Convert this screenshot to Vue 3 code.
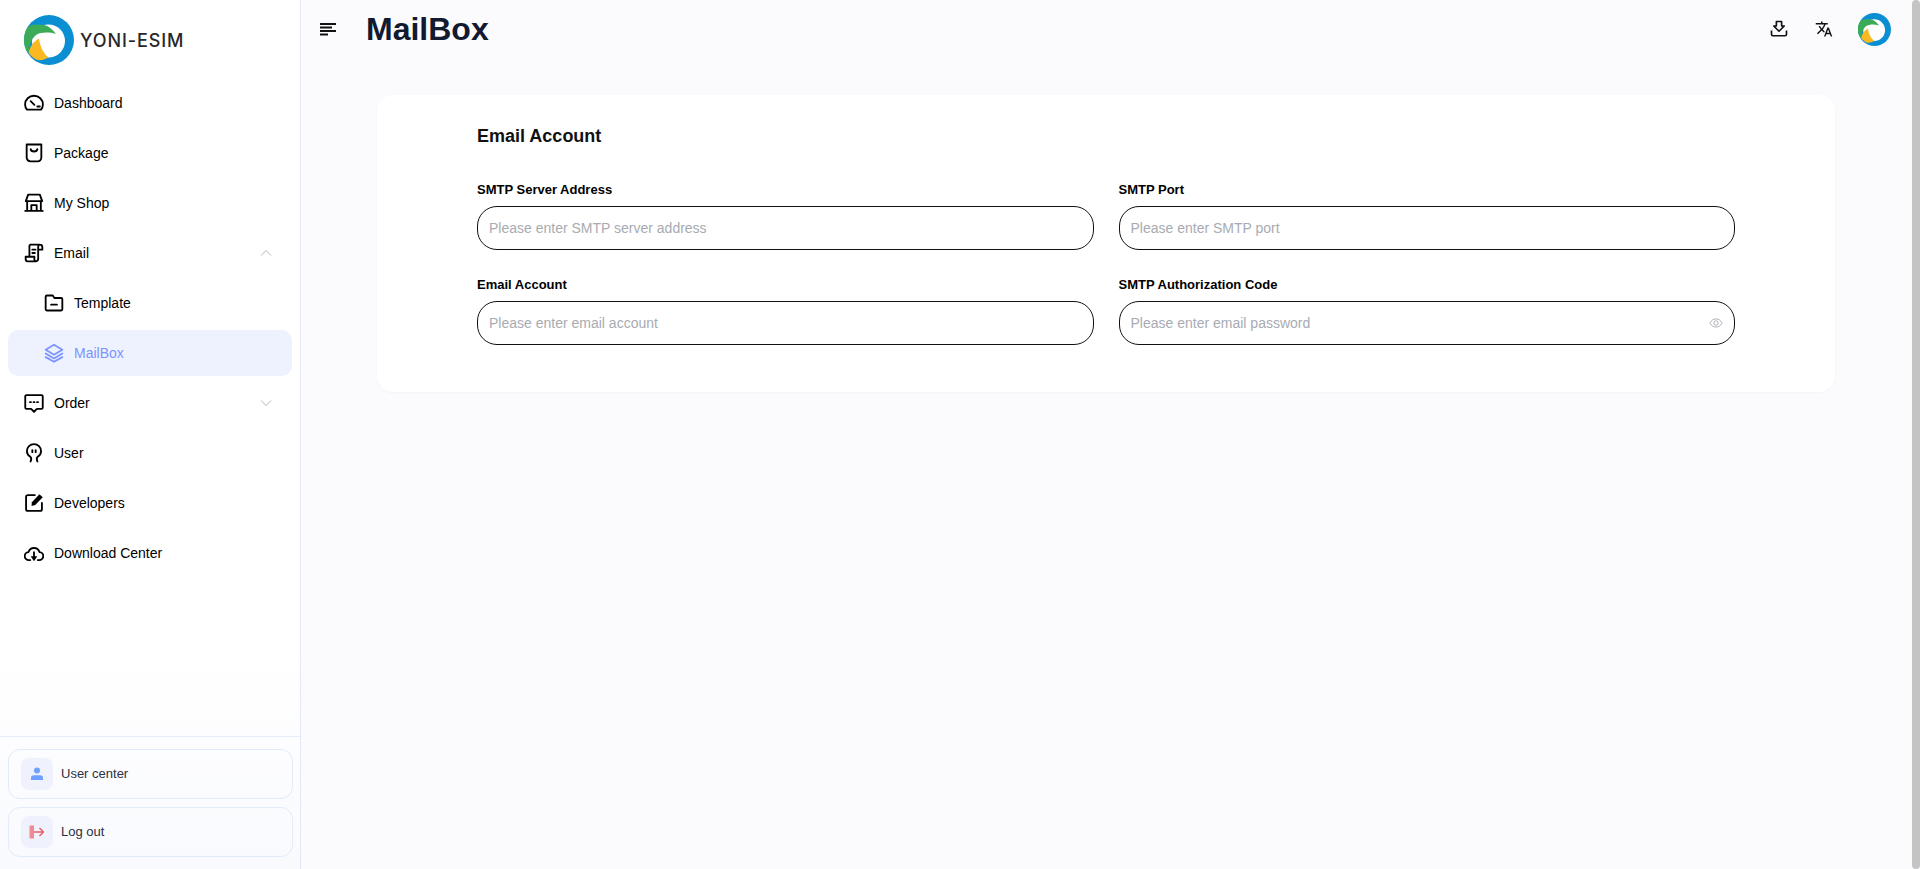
<script setup>
const menu = [
  { label: 'Dashboard', d: 'M3.6 20C2.2 18.2 1.3 16 1.3 13.7 1.3 7.9 6.100 3.300 12 3.300s10.700 4.600 10.700 10.400c0 2.300-.9 4.500-2.300 6.300ZM8 9.800l4.500 4.400M16 16.200h3' },
  { label: 'Package', d: 'M3.200 1.800h17.600v15.700a4.500 4.500 0 0 1-4.500 4.500H7.700a4.500 4.500 0 0 1-4.500-4.500ZM8 7.500c.6 3.600 7.400 3.600 8 0' },
  { label: 'My Shop', d: 'M5 2h14l2.800 7.800H2.200ZM3.800 9.800v11.400M20.200 9.800v11.400M1.500 21.500h21M8.800 21.500v-7h6.400v7' },
  { label: 'Email', chevron: 'up', d: 'M7.500 2H19a3 3 0 0 1 3 3v3h-4M19 2a2.500 2.500 0 0 0-2 2.500v14a3 3 0 0 1-3 3.500H4.500A2.500 2.500 0 0 1 2 19.500V16.500h10.500v2a3 3 0 0 0 1.500 3.500M6.500 16.500V4.500a2.500 2.500 0 0 1 1-2.500M10 8h3.800M10 12h3' },
  { label: 'Template', sub: true, d: 'M2 4.500A1.500 1.500 0 0 1 3.500 3h7l2 3H20.500A1.500 1.500 0 0 1 22 7.500v12a1.500 1.500 0 0 1-1.500 1.500h-17A1.500 1.500 0 0 1 2 19.500ZM8.500 14h7' },
  { label: 'MailBox', sub: true, active: true, d: 'M12 2 22 8 12 14 2 8ZM2 12.500l10 6 10-6M2 17l10 5.500 10-5.500' },
  { label: 'Order', chevron: 'down', d: 'M3 2.500h18A1.500 1.500 0 0 1 22.500 4v13.500a1.500 1.500 0 0 1-1.500 1.500H15.500L12 22.500 8.500 19H3a1.500 1.500 0 0 1-1.500-1.500V4A1.500 1.500 0 0 1 3 2.500ZM7.200 11h1.100M11.500 11h1.100M15.700 11h1.100' },
  { label: 'User', d: 'M7.500 16.500C5 14.800 3.500 12.500 3.500 9.800a8.500 8.500 0 0 1 17 0c0 2.700-1.500 5-4 6.700M7.500 16.500c1.500 1 1.300 3.500.4 5.700M16.500 16.500c-1.500 1-1.300 3.500-.4 5.700M10 8.500v2.500M14 8.500v2.500' },
  { label: 'Developers', d: 'M21.500 12v7.500A2 2 0 0 1 19.500 21.500h-15A2 2 0 0 1 2.500 19.500v-15A2 2 0 0 1 4.500 2.500H13', fill: 'M9.500 11 18.500 1.500 22.500 5l-9 9.500-4.500 1Z' },
  { label: 'Download Center', d: 'M7.500 20.500H6a4.800 4.800 0 0 1-.6-9.600 6.900 6.900 0 0 1 13.200 0A4.800 4.800 0 0 1 18 20.500h-1.500M12 11v8', fill: 'M8 16h8l-4 6Z' }
]
const fields = [
  { label: 'SMTP Server Address', placeholder: 'Please enter SMTP server address' },
  { label: 'SMTP Port', placeholder: 'Please enter SMTP port' },
  { label: 'Email Account', placeholder: 'Please enter email account' },
  { label: 'SMTP Authorization Code', placeholder: 'Please enter email password', eye: true }
]
</script>

<template>
  <div class="shell">
    <aside class="sidebar">
      <div class="brand">
        <svg class="logo" viewBox="0 0 50 50">
          <circle cx="25" cy="25" r="25" fill="#0b8fd3" />
          <circle cx="24.500" cy="26" r="16.500" fill="#fff" />
          <path d="M3.650 38A25 25 0 0 1 4 11.500C9 9 15 9 20 10 25 11 29 15 32 19 25 17 17 17 12 20 7 24 5 31 4.700 38Z" fill="#3cab57" />
          <path d="M15 23.500C16 31 19 38 24.500 42.500 21 44.500 17 45.500 14 45 10 44 7 41 4.700 38 5.500 32 9.500 26.500 15 23.500Z" fill="#fbb921" />
        </svg>
        <span class="brand-name">YONI-ESIM</span>
      </div>
      <nav class="menu">
        <a v-for="item in menu" :key="item.label" class="item" :class="{ sub: item.sub, active: item.active }">
          <svg class="icon" viewBox="0 0 24 24">
            <path :d="item.d" />
            <path v-if="item.fill" :d="item.fill" class="solid" />
          </svg>
          <span class="item-label">{{ item.label }}</span>
          <svg v-if="item.chevron" class="chevron" viewBox="0 0 12 8">
            <path :d="item.chevron === 'up' ? 'M1 6.500 6 1.500l5 5' : 'M1 1.500 6 6.500l5-5'" />
          </svg>
        </a>
      </nav>
      <div class="foot">
        <a class="foot-btn">
          <span class="foot-icon">
            <svg viewBox="0 0 16 16" width="16" height="16">
              <circle cx="8" cy="4.500" r="3" fill="#6f9fff" />
              <path d="M2 14v-2.500C2 10 3.500 9.200 5 9.200h6c1.500 0 3 .8 3 2.300V14Z" fill="#6f9fff" />
            </svg>
          </span>
          <span class="foot-label">User center</span>
        </a>
        <a class="foot-btn">
          <span class="foot-icon">
            <svg viewBox="0 0 16 16" width="16" height="16">
              <rect x="0.500" y="1.500" width="4.500" height="13" fill="#ef8b92" />
              <path d="M5 8h9.500M10.500 4l4 4-4 4" fill="none" stroke="#ec5f69" stroke-width="1.500" />
            </svg>
          </span>
          <span class="foot-label">Log out</span>
        </a>
      </div>
    </aside>

    <div class="main">
      <header class="topbar">
        <svg class="hamburger" viewBox="0 0 16 13">
          <path d="M0 1h16M0 4.500h12M0 8h16M0 11.500h8" />
        </svg>
        <h1 class="title">MailBox</h1>
        <div class="tools">
          <svg class="tool" viewBox="0 0 24 24">
            <path d="M8.500 2h7v6H19l-7 7-7-7h3.500ZM2 14v5a2 2 0 0 0 2 2h16a2 2 0 0 0 2-2v-5" class="tool-line" />
          </svg>
          <svg class="tool" viewBox="0 0 24 24">
            <path d="M12.870 15.070l-2.540-2.510.03-.03c1.740-1.940 2.980-4.170 3.710-6.530H17V4h-7V2H8v2H1v1.990h11.170C11.500 7.920 10.440 9.750 9 11.350 8.070 10.320 7.300 9.190 6.690 8h-2c.73 1.630 1.730 3.170 2.980 4.560l-5.090 5.020L4 19l5-5 3.110 3.110.76-2.040zM18.500 10h-2L12 22h2l1.120-3h4.750L21 22h2l-4.500-12zm-2.620 7l1.620-4.330L19.120 17h-3.240z" fill="#111" />
          </svg>
          <svg class="avatar" viewBox="0 0 50 50">
            <circle cx="25" cy="25" r="25" fill="#0b8fd3" />
            <circle cx="24.500" cy="26" r="16.500" fill="#fff" />
            <path d="M3.650 38A25 25 0 0 1 4 11.500C9 9 15 9 20 10 25 11 29 15 32 19 25 17 17 17 12 20 7 24 5 31 4.700 38Z" fill="#3cab57" />
            <path d="M15 23.500C16 31 19 38 24.500 42.500 21 44.500 17 45.500 14 45 10 44 7 41 4.700 38 5.500 32 9.500 26.500 15 23.500Z" fill="#fbb921" />
          </svg>
        </div>
      </header>
      <section class="card">
        <h2 class="card-title">Email Account</h2>
        <div class="form">
          <label v-for="f in fields" :key="f.label" class="field">
            <span class="field-label">{{ f.label }}</span>
            <span class="input-wrap">
              <input class="input" type="text" :placeholder="f.placeholder" />
              <svg v-if="f.eye" class="eye" viewBox="0 0 24 24">
                <path d="M1.500 12C4 7.500 7.700 5 12 5s8 2.500 10.500 7c-2.500 4.500-6.200 7-10.500 7S4 16.500 1.500 12Z" />
                <circle cx="12" cy="12" r="3.800" />
              </svg>
            </span>
          </label>
        </div>
      </section>
    </div>
    <div class="scrollbar"></div>
  </div>
</template>

<style>
html, body { margin: 0; height: 100%; overflow: hidden; }
</style>

<style scoped>
.shell {
  display: flex;
  height: 869px;
  background: #fbfbfe;
  font-family: "Liberation Sans", Arial, sans-serif;
  color: #000;
}
.sidebar {
  width: 301px;
  flex: none;
  display: flex;
  flex-direction: column;
  border-right: 1px solid #e6e8f6;
  box-sizing: border-box;
  background: linear-gradient(180deg, #fff 75%, #f9fafe 100%);
}
.brand { height: 80px; display: flex; align-items: center; padding-left: 24px; box-sizing: border-box; }
.logo { width: 50px; height: 50px; flex: none; }
.brand-name {
  margin-left: 6px;
  font-family: Inter, sans-serif;
  font-size: 18px;
  font-weight: 500;
  letter-spacing: .9px;
  color: #2b2728;
}
.menu { display: flex; flex-direction: column; gap: 4px; padding: 0 8px; flex: 1; }
.item {
  height: 46px;
  display: flex;
  align-items: center;
  padding-left: 16px;
  padding-right: 20px;
  border-radius: 10px;
  font-size: 14px;
  box-sizing: border-box;
}
.item.sub { padding-left: 36px; }
.item.active { background: #eef2fe; color: #7c94ff; }
.icon { width: 20px; height: 20px; flex: none; margin-right: 10px; fill: none; stroke: currentColor; stroke-width: 2.200; stroke-linejoin: round; stroke-linecap: round; }
.icon .solid { fill: currentColor; stroke: none; }
.item-label { flex: 1; }
.chevron { width: 12px; height: 8px; fill: none; stroke: #aeb3bf; stroke-width: 1; }
.foot {
  border-top: 1px solid #e6edfb;
  padding: 12px 7px 12px 8px;
  display: flex;
  flex-direction: column;
  gap: 8px;
}
.foot-btn {
  height: 50px;
  display: flex;
  align-items: center;
  gap: 8px;
  padding-left: 12px;
  border: 1px solid #e2ebfb;
  border-radius: 12px;
  font-size: 13px;
  color: #2c3040;
  box-sizing: border-box;
}
.foot-label { margin-top: -2px; }
.foot-icon {
  width: 32px;
  height: 32px;
  border-radius: 8px;
  background: #eff2fd;
  display: flex;
  align-items: center;
  justify-content: center;
}
.main { flex: 1; min-width: 0; }
.topbar { height: 58px; display: flex; align-items: center; padding-left: 19px; padding-right: 21px; }
.hamburger { width: 16px; height: 13px; flex: none; fill: none; stroke: #111; stroke-width: 1.800; margin-right: 31px; }
.title { margin: 0 0 0 -1px; flex: 1; font-size: 32px; font-weight: 700; color: #111a2e; line-height: 58px; }
.tools { display: flex; align-items: center; }
.tool { width: 18px; height: 18px; margin-right: 27px; }
.tool + .tool { margin-right: 25px; }
.tool-line { fill: none; stroke: #111; stroke-width: 2.200; stroke-linejoin: round; }
.avatar { width: 33px; height: 33px; }
.card {
  margin: 37px 77px 0 76px;
  padding: 30px 100px 47px;
  background: #fff;
  border-radius: 16px;
  box-shadow: 0 1px 3px rgba(30, 40, 90, .03);
}
.card-title { margin: 0 0 34px; font-size: 18px; font-weight: 700; line-height: 22px; color: #111; }
.form { display: grid; grid-template-columns: 1fr 1fr; column-gap: 25px; row-gap: 26px; }
.field { display: flex; flex-direction: column; gap: 7px; }
.field-label { font-size: 13px; font-weight: 700; line-height: 18px; height: 18px; color: #000; }
.input-wrap { position: relative; display: block; }
.input {
  display: block;
  width: 100%;
  height: 44px;
  box-sizing: border-box;
  padding: 0 11px;
  border: 1px solid #111;
  border-radius: 20px;
  font: 14px "Liberation Sans", Arial, sans-serif;
  background: #fff;
  outline: none;
}
.input::placeholder { color: #a8abb2; opacity: 1; }
.eye {
  position: absolute;
  right: 12px;
  top: 15px;
  width: 14px;
  height: 14px;
  fill: none;
  stroke: #a8abb2;
  stroke-width: 1.600;
}
.scrollbar { width: 8px; flex: none; background: #c4c4c4; border-radius: 4px; }
</style>
